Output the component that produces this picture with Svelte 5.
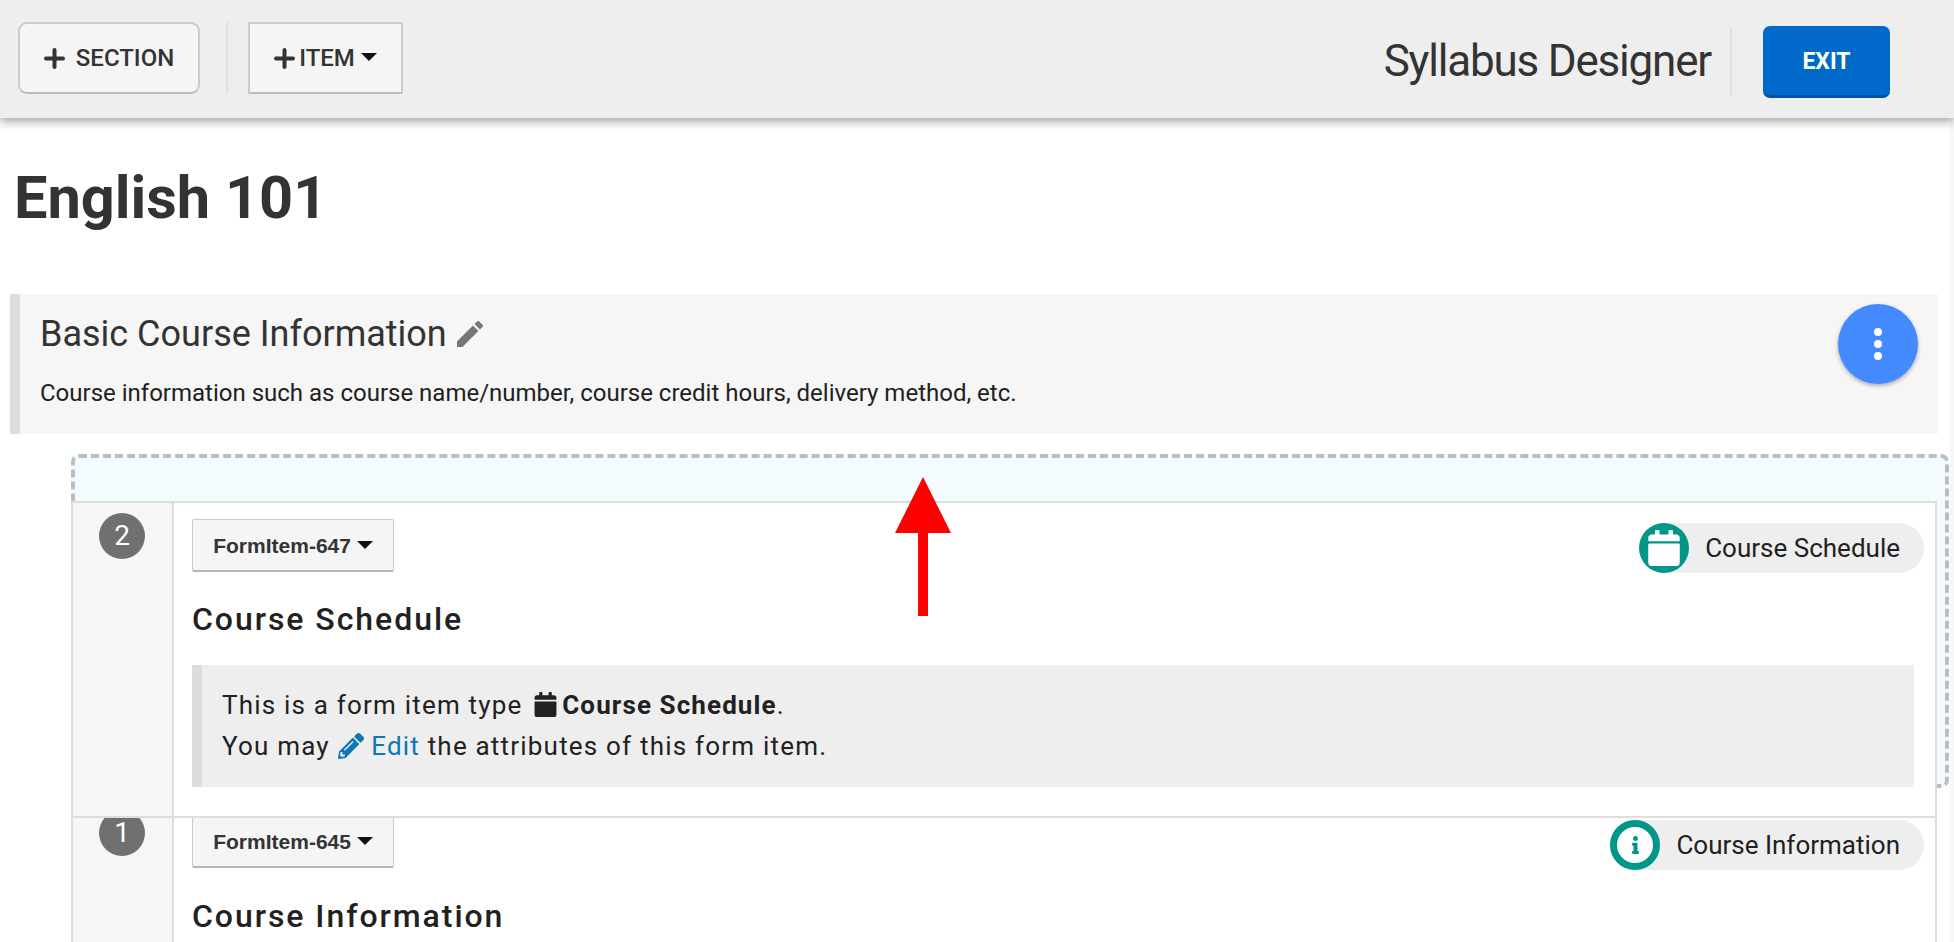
<script>
  const pencilFa = 'M497.9 142.1l-46.1 46.1c-4.7 4.7-12.3 4.7-17 0l-111-111c-4.7-4.7-4.7-12.3 0-17l46.1-46.1c18.7-18.7 49.1-18.7 67.9 0l60.1 60.1c18.8 18.7 18.8 49.1 0 67.9zM284.2 99.8L21.6 362.4.4 483.9c-2.9 16.4 11.4 30.6 27.8 27.8l121.5-21.3 262.6-262.6c4.7-4.7 4.7-12.3 0-17l-111-111c-4.8-4.7-12.4-4.7-17.1 0zM124.1 339.9c-5.5-5.5-5.5-14.3 0-19.8l154-154c5.5-5.5 14.3-5.5 19.8 0s5.5 14.3 0 19.8l-154 154c-5.5 5.5-14.3 5.5-19.8 0zM88 424h48v36.3l-64.5 11.3-31.1-31.1L51.7 376H88v48z'
  const calendarFa = 'M12 192h424c6.6 0 12 5.4 12 12v260c0 26.5-21.5 48-48 48H48c-26.5 0-48-21.5-48-48V204c0-6.6 5.4-12 12-12zm436-44v-36c0-26.5-21.5-48-48-48h-48V12c0-6.6-5.4-12-12-12h-40c-6.6 0-12 5.4-12 12v52H160V12c0-6.6-5.4-12-12-12h-40c-6.6 0-12 5.4-12 12v52H48C21.5 64 0 85.5 0 112v36c0 6.6 5.4 12 12 12h424c6.6 0 12-5.4 12-12z'
  const infoFa = 'M20 424.229h20V279.771H20c-11.046 0-20-8.954-20-20V212c0-11.046 8.954-20 20-20h112c11.046 0 20 8.954 20 20v212.229h20c11.046 0 20 8.954 20 20V492c0 11.046-8.954 20-20 20H20c-11.046 0-20-8.954-20-20v-47.771c0-11.046 8.954-20 20-20zM96 0C56.235 0 24 32.235 24 72s32.235 72 72 72 72-32.235 72-72S135.764 0 96 0z'
</script>

<div class="page">
  <header class="toolbar">
    <button class="tool section-btn">
      <svg class="plus" viewBox="0 0 21 21"><path d="M10.5 2v17M2 10.5h17" /></svg>
      <span>SECTION</span>
    </button>
    <div class="sep"></div>
    <button class="tool item-btn">
      <svg class="plus" viewBox="0 0 21 21"><path d="M10.5 2v17M2 10.5h17" /></svg>
      <span>ITEM</span>
      <i class="caret"></i>
    </button>
    <div class="brand">Syllabus Designer</div>
    <div class="sep end"></div>
    <button class="exit">EXIT</button>
  </header>

  <main>
    <h1>English 101</h1>

    <section class="info">
      <div class="info-title">
        <span>Basic Course Information</span>
        <svg class="edit" viewBox="3 3 18 18"><path d="M3 17.25V21h3.75L17.81 9.94l-3.75-3.75L3 17.25zM20.71 7.04c.39-.39.39-1.02 0-1.41l-2.34-2.34c-.39-.39-1.02-.39-1.41 0l-1.83 1.83 3.75 3.75 1.83-1.83z" /></svg>
      </div>
      <p>Course information such as course name/number, course credit hours, delivery method, etc.</p>
      <button class="fab" aria-label="menu"><i></i><i></i><i></i></button>
    </section>

    <div class="dropzone"></div>

    <div class="items">
      <article class="item">
        <div class="rail"><span class="num">2</span></div>
        <div class="body">
          <div class="top">
            <button class="form-btn">FormItem-647 <i class="caret"></i></button>
            <div class="chip">
              <span class="chip-icon">
                <svg class="cal" viewBox="0 0 448 512"><path d={calendarFa} /></svg>
              </span>
              <span class="chip-text">Course Schedule</span>
            </div>
          </div>
          <h3>Course Schedule</h3>
          <div class="note">
            <div>This is a form item type <svg class="inl-cal" viewBox="0 0 448 512"><path d={calendarFa} /></svg><b>Course Schedule</b>.</div>
            <div>You may <svg class="inl-pen" viewBox="0 0 512 512"><path d={pencilFa} /></svg> <a href="#edit">Edit</a> the attributes of this form item.</div>
          </div>
        </div>
      </article>

      <article class="item next">
        <div class="rail"><span class="num">1</span></div>
        <div class="body">
          <div class="top">
            <button class="form-btn">FormItem-645 <i class="caret"></i></button>
            <div class="chip">
              <span class="chip-icon round">
                <svg class="inf" viewBox="0 0 192 512"><path d={infoFa} /></svg>
              </span>
              <span class="chip-text">Course Information</span>
            </div>
          </div>
          <h3>Course Information</h3>
        </div>
      </article>
    </div>
  </main>

  <svg class="arrow" viewBox="0 0 56 139"><path d="M28 0L56 56H33V139H23V56H0z" /></svg>
  <div class="track"></div>
</div>

<style>
  :global(body) {
    margin: 0;
    background: #fff;
    overflow: hidden;
  }

  .page {
    position: relative;
    width: 1954px;
    height: 942px;
    overflow: hidden;
    font-family: Roboto, "Liberation Sans", sans-serif;
    color: #212121;
  }

  .toolbar {
    position: relative;
    z-index: 3;
    box-sizing: border-box;
    height: 118px;
    padding: 0 64px 0 18px;
    display: flex;
    align-items: center;
    background: #eee;
    box-shadow: 0 3px 10px rgba(0, 0, 0, 0.4);
  }

  .tool {
    box-sizing: border-box;
    height: 72px;
    margin-bottom: 2px;
    display: flex;
    align-items: center;
    justify-content: center;
    background: #f5f5f5;
    border: 2px solid #ccc;
    border-bottom-color: #bbb;
    font: 500 24px Roboto, sans-serif;
    color: #333;
    padding: 0;
  }

  .section-btn {
    width: 182px;
    border-radius: 9px;
    gap: 11px;
  }

  .item-btn {
    width: 155px;
    border-radius: 2px;
    gap: 4px;
  }

  .plus {
    width: 21px;
    height: 21px;
    fill: none;
    stroke: #333;
    stroke-width: 4;
    stroke-linecap: round;
  }

  .caret {
    display: inline-block;
    width: 0;
    height: 0;
    border-left: 8px solid transparent;
    border-right: 8px solid transparent;
    border-top: 8px solid #111;
    vertical-align: middle;
  }

  .item-btn .caret {
    margin-left: 2px;
    margin-bottom: 3px;
  }

  .sep {
    width: 2px;
    height: 72px;
    margin: 0 20px 2px 26px;
    background: #e0e0e0;
  }

  .sep.end {
    height: 70px;
    margin: 6px 31px 0 19px;
  }

  .brand {
    margin-left: auto;
    margin-top: 4px;
    font-size: 44px;
    font-weight: 400;
    letter-spacing: -1.2px;
    color: #333;
    white-space: nowrap;
  }

  .exit {
    width: 127px;
    height: 72px;
    margin-top: 6px;
    padding: 2px 0 0;
    border: 0;
    border-bottom: 3px solid #0052a5;
    border-radius: 7px;
    background: #0069ca;
    color: #fff;
    font: 700 23px Roboto, sans-serif;
  }

  h1 {
    margin: 0;
    padding: 46px 0 0 14px;
    height: 130px;
    box-sizing: border-box;
    font-size: 59.5px;
    line-height: 68px;
    font-weight: 700;
    color: #333;
  }

  .info {
    position: relative;
    box-sizing: border-box;
    height: 140px;
    margin: 46px 16px 0 10px;
    padding: 16px 20px 0 20px;
    background: #f6f6f6;
    border-left: 10px solid #ddd;
  }

  .info-title {
    display: flex;
    align-items: center;
    gap: 10px;
    font-size: 36px;
    line-height: 48px;
    font-weight: 400;
    color: #333;
  }

  .edit {
    width: 26px;
    height: 26px;
    fill: #757575;
  }

  .info p {
    margin: 20px 0 0;
    font-size: 24px;
    line-height: 30px;
    color: #212121;
  }

  .fab {
    position: absolute;
    top: 10px;
    right: 20px;
    width: 80px;
    height: 80px;
    padding: 0;
    border: 0;
    border-radius: 50%;
    background: #448aff;
    box-shadow: 0 2px 4px rgba(0, 0, 0, 0.3);
    display: flex;
    flex-direction: column;
    align-items: center;
    justify-content: center;
    gap: 4px;
  }

  .fab i {
    width: 8px;
    height: 8px;
    border-radius: 50%;
    background: #fff;
  }

  .dropzone {
    box-sizing: border-box;
    height: 334px;
    margin: 20px 5px 0 71px;
    background: #f3fbfe;
    border: 4px dashed #b8bfc3;
    border-radius: 8px;
  }

  .items {
    position: relative;
    margin: -287px 17px 0 71px;
  }

  .item {
    box-sizing: border-box;
    height: 315px;
    display: flex;
    background: #fff;
    border: 2px solid #ddd;
    border-bottom: 0;
  }

  .item.next {
    height: 200px;
  }

  .rail {
    box-sizing: content-box;
    width: 99px;
    flex: none;
    overflow: hidden;
    background: #f6f6f6;
    border-right: 2px solid #ddd;
    display: flex;
    justify-content: center;
    align-items: flex-start;
  }

  .num {
    width: 46px;
    height: 46px;
    margin: 10px 1px 0 0;
    border-radius: 50%;
    background: #707070;
    color: #fff;
    font-size: 28px;
    line-height: 46px;
    text-align: center;
  }

  .next .num {
    margin-top: -8px;
  }

  .body {
    flex: 1;
    min-width: 0;
    overflow: hidden;
    padding: 16px 11px 0 18px;
  }

  .next .body {
    padding-top: 0;
  }

  .next .top {
    margin-top: -3px;
  }

  .top {
    display: flex;
    justify-content: space-between;
    align-items: flex-start;
  }

  .form-btn {
    box-sizing: border-box;
    width: 202px;
    height: 53px;
    padding: 2px 0 0;
    background: #f5f5f5;
    border: 1px solid #ccc;
    border-bottom: 2px solid #b5b5b5;
    border-radius: 2px;
    font: 700 21px "Liberation Sans", Arial, sans-serif;
    color: #333;
  }

  .form-btn .caret {
    margin-bottom: 4px;
  }

  .chip {
    display: flex;
    align-items: center;
    height: 50px;
    margin-top: 4px;
    background: #eee;
    border-radius: 25px;
  }

  .next .chip {
    margin-top: 5px;
  }

  .chip-icon {
    width: 50px;
    height: 50px;
    border-radius: 50%;
    background: #009688;
    display: flex;
    align-items: center;
    justify-content: center;
  }

  .cal {
    width: 32px;
    height: 36px;
    fill: #fff;
  }

  .chip-icon.round {
    box-sizing: border-box;
    background: #fff;
    border: 7px solid #009688;
  }

  .inf {
    width: 7px;
    height: 18px;
    fill: #009688;
  }

  .chip-text {
    margin: 0 24px 0 16px;
    font-size: 26px;
    color: #212121;
    white-space: nowrap;
  }

  h3 {
    margin: 29px 0 0;
    font-size: 32px;
    line-height: 34px;
    font-weight: 500;
    letter-spacing: 1.95px;
    color: #212121;
  }

  .note {
    box-sizing: border-box;
    height: 122px;
    margin: 29px 10px 0 0;
    padding: 20px 20px 0;
    background: #eee;
    border-left: 10px solid #ddd;
    font-size: 26px;
    line-height: 41px;
    letter-spacing: 1.2px;
    color: #212121;
  }

  .note b {
    font-weight: 700;
    letter-spacing: 1.1px;
  }

  .inl-cal {
    width: 23px;
    height: 25px;
    margin: 0 5px 0 4px;
    vertical-align: -3px;
    fill: #212121;
  }

  .inl-pen {
    width: 26px;
    height: 26px;
    vertical-align: -4px;
    fill: #0f76b5;
  }

  .note a {
    color: #0f76b5;
    text-decoration: none;
  }

  .arrow {
    position: absolute;
    left: 895px;
    top: 477px;
    width: 56px;
    height: 139px;
    fill: #f00;
  }

  .track {
    position: absolute;
    top: 118px;
    right: 0;
    bottom: 0;
    width: 4px;
    background: #f7f7f7;
  }
</style>
